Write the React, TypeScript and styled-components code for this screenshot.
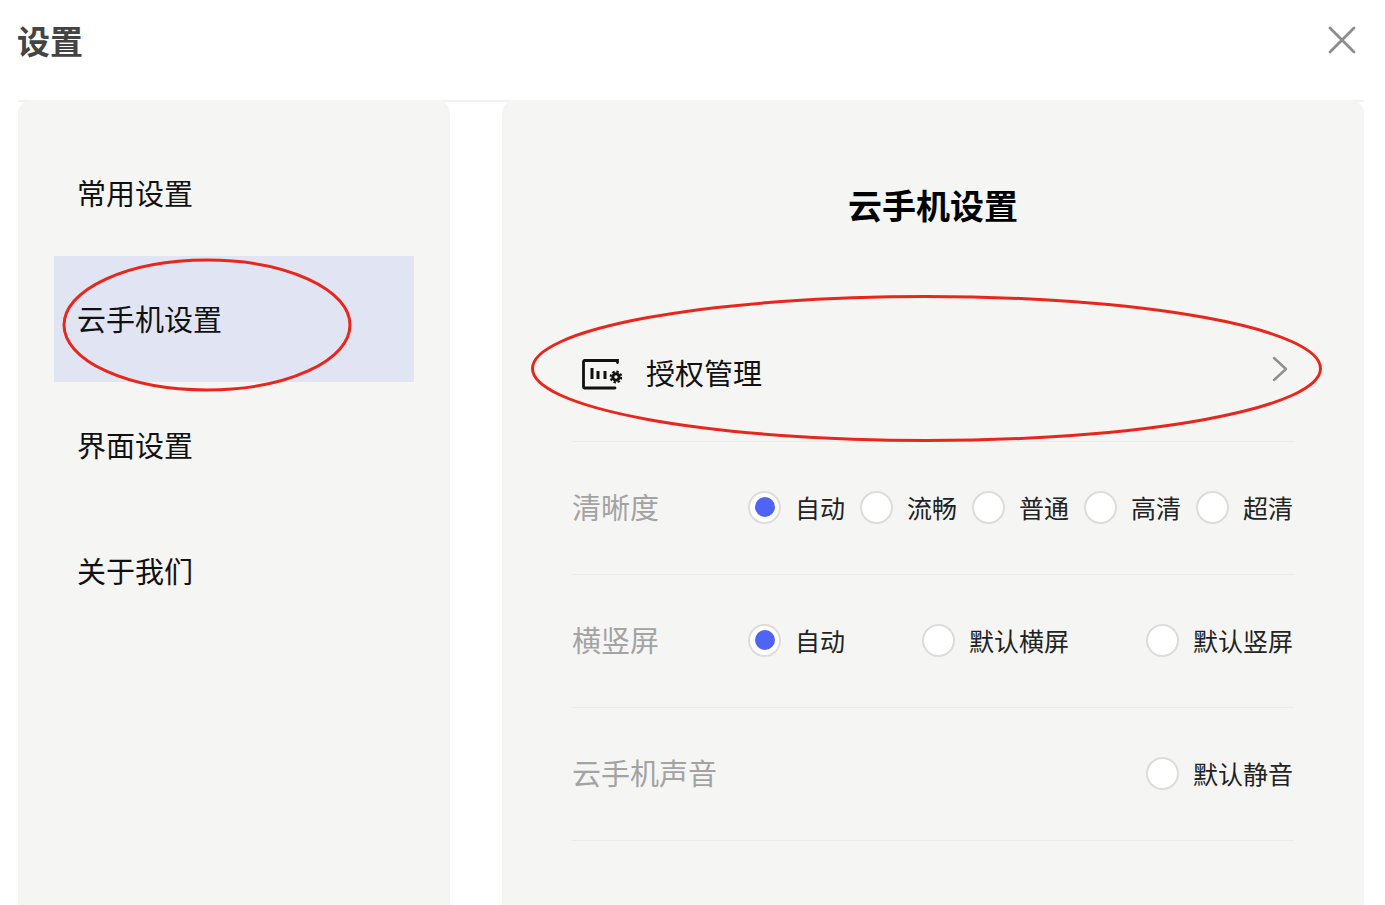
import React from "react"
import styled, { createGlobalStyle } from "styled-components"

const navItems = ["常用设置", "云手机设置", "界面设置", "关于我们"]

interface OptionData {
  label: string
  checked?: boolean
}

interface SettingData {
  name: string
  options: OptionData[]
  alignEnd?: boolean
}

const settings: SettingData[] = [
  {
    name: "清晰度",
    options: [
      { label: "自动", checked: true },
      { label: "流畅" },
      { label: "普通" },
      { label: "高清" },
      { label: "超清" },
    ],
  },
  {
    name: "横竖屏",
    options: [
      { label: "自动", checked: true },
      { label: "默认横屏" },
      { label: "默认竖屏" },
    ],
  },
  {
    name: "云手机声音",
    options: [{ label: "默认静音" }],
    alignEnd: true,
  },
]

function AuthIcon() {
  return (
    <IconSvg viewBox="0 0 40 32" width="40" height="32">
      <path
        d="M35.5 4.5 V2.5 H2.5 A1.2 1.2 0 0 0 1.5 3.5 V29 A1.2 1.2 0 0 0 2.5 30 H33"
        fill="none"
        stroke="#111"
        strokeWidth="2.8"
        strokeLinecap="round"
      />
      <path
        d="M10 10 V21 M16 13 V21 M23 13 V21"
        fill="none"
        stroke="#111"
        strokeWidth="3"
      />
      <circle cx="34" cy="19" r="3.2" fill="none" stroke="#111" strokeWidth="3" />
      <circle
        cx="34"
        cy="19"
        r="5.4"
        fill="none"
        stroke="#111"
        strokeWidth="2"
        strokeDasharray="2.4 1.8"
      />
    </IconSvg>
  )
}

function App() {
  return (
    <Page>
      <GlobalStyle />
      <Header>
        <Heading>设置</Heading>
        <svg viewBox="0 0 28 28" width="28" height="28">
          <path
            d="M2 2 L26 26 M26 2 L2 26"
            stroke="#8c8c8c"
            strokeWidth="2.8"
            strokeLinecap="round"
          />
        </svg>
      </Header>
      <Body>
        <Sidebar>
          {navItems.map((item, index) => (
            <NavItem key={item} $active={index === 1}>
              <NavText>{item}</NavText>
              {index === 1 && (
                <NavRing viewBox="0 0 290 134" width="290" height="134">
                  <ellipse
                    cx="145"
                    cy="67"
                    rx="143"
                    ry="65"
                    fill="none"
                    stroke="#e8261c"
                    strokeWidth="3"
                  />
                </NavRing>
              )}
            </NavItem>
          ))}
        </Sidebar>
        <Panel>
          <PanelTitle>云手机设置</PanelTitle>
          <AuthRow>
            <AuthIcon />
            <AuthLabel>授权管理</AuthLabel>
            <Chevron viewBox="0 0 16 26" width="16" height="26">
              <path
                d="M2 2 L14 13 L2 24"
                fill="none"
                stroke="#8f8f8f"
                strokeWidth="2.4"
                strokeLinecap="round"
                strokeLinejoin="round"
              />
            </Chevron>
            <AuthRing viewBox="0 0 792 147" width="792" height="147">
              <ellipse
                cx="395.5"
                cy="73.5"
                rx="394"
                ry="72"
                fill="none"
                stroke="#e8261c"
                strokeWidth="3"
              />
            </AuthRing>
          </AuthRow>
          {settings.map((setting) => (
            <SettingRow key={setting.name}>
              <SettingName>{setting.name}</SettingName>
              <OptionGroup $alignEnd={setting.alignEnd}>
                {setting.options.map((option) => (
                  <Option key={option.label}>
                    <Radio $checked={option.checked} />
                    <OptionLabel>{option.label}</OptionLabel>
                  </Option>
                ))}
              </OptionGroup>
            </SettingRow>
          ))}
        </Panel>
      </Body>
    </Page>
  )
}

const GlobalStyle = createGlobalStyle`
  html, body {
    margin: 0;
    padding: 0;
    background: #fff;
    overflow: hidden;
  }
  body {
    font-family: "Noto Sans CJK SC", "Noto Sans", sans-serif;
  }
`

const Page = styled.div`
  height: 905px;
  padding: 0 21px 0 18px;
  box-sizing: border-box;
  display: flex;
  flex-direction: column;
  overflow: hidden;
`

const Header = styled.header`
  height: 100px;
  flex: none;
  box-sizing: content-box;
  border-bottom: 2px solid #f2f2f2;
  margin-bottom: -2px;
  display: flex;
  align-items: center;
  justify-content: space-between;
  padding-right: 8px;

  svg {
    margin-top: -20px;
  }
`

const Heading = styled.h1`
  margin: -20px 0 0 -1px;
  font-size: 33px;
  line-height: 48px;
  font-weight: 700;
  color: #444;
`

const Body = styled.div`
  flex: 1;
  display: grid;
  grid-template-columns: 432px 862px;
  column-gap: 52px;
  min-height: 0;
`

const Sidebar = styled.nav`
  background: #f5f5f4;
  border-radius: 14px 14px 0 0;
  padding: 30px 36px 0;
`

const NavItem = styled.div<{ $active?: boolean }>`
  position: relative;
  height: 126px;
  display: flex;
  align-items: center;
  padding-left: 23px;
  font-size: 29px;
  color: #111;
  background: ${(p) => (p.$active ? "#e1e5f3" : "transparent")};
`

const NavText = styled.span`
  margin-top: -2px;
`

const NavRing = styled.svg`
  position: absolute;
  left: 8px;
  top: 2px;
  pointer-events: none;
`

const Panel = styled.main`
  background: #f5f5f4;
  border-radius: 14px 14px 0 0;
  padding: 78px 70px 0;
`

const PanelTitle = styled.h2`
  margin: 0 0 77px;
  font-size: 34px;
  line-height: 54px;
  font-weight: 700;
  color: #000;
  text-align: center;
`

const AuthRow = styled.div`
  position: relative;
  height: 133px;
  box-sizing: border-box;
  border-bottom: 1px solid #ebebeb;
  display: flex;
  align-items: center;
  padding: 0 6px 0 10px;
`

const IconSvg = styled.svg`
  flex: none;
  margin-top: -3px;
`

const AuthLabel = styled.span`
  margin-left: 24px;
  font-size: 29px;
  color: #111;
  margin-top: -6px;
`

const Chevron = styled.svg`
  margin-left: auto;
  margin-top: -12px;
`

const AuthRing = styled.svg`
  position: absolute;
  left: -41px;
  top: -14px;
  pointer-events: none;
`

const SettingRow = styled.div`
  height: 133px;
  box-sizing: border-box;
  border-bottom: 1px solid #ebebeb;
  padding-bottom: 2px;
  display: flex;
  align-items: center;
  justify-content: space-between;
`

const SettingName = styled.span`
  font-size: 29px;
  color: #a3a3a3;
  margin-top: -2px;
`

const OptionGroup = styled.div<{ $alignEnd?: boolean }>`
  width: 546px;
  display: flex;
  justify-content: ${(p) => (p.$alignEnd ? "flex-end" : "space-between")};
`

const Option = styled.label`
  display: flex;
  align-items: center;
  gap: 14px;
`

const Radio = styled.span<{ $checked?: boolean }>`
  width: 33px;
  height: 33px;
  box-sizing: border-box;
  border-radius: 50%;
  border: 2px solid #dddcda;
  background: #fff;
  display: flex;
  align-items: center;
  justify-content: center;

  &::after {
    content: "";
    width: 20px;
    height: 20px;
    border-radius: 50%;
    background: ${(p) => (p.$checked ? "#4f63f5" : "transparent")};
  }
`

const OptionLabel = styled.span`
  font-size: 25px;
  padding-right: 1px;
  color: #222;
`

export default App
